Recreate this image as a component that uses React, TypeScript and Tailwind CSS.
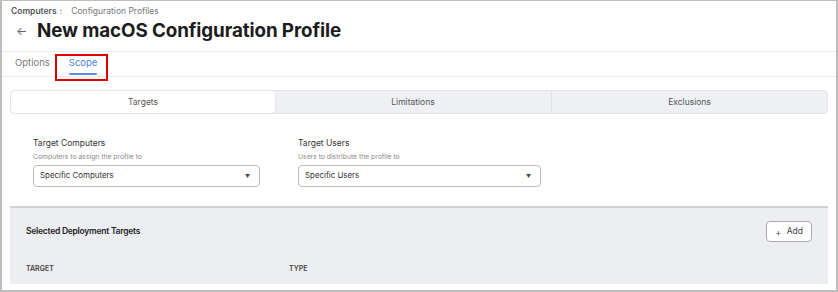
import React from "react";

export default function App() {
  return (
    <div
      className="w-[838px] h-[292px] bg-white border-x-2 border-b-2 border-t border-[#bdbdbd] overflow-hidden text-[#222]"
      style={{ fontFamily: "Inter, 'Noto Sans', sans-serif" }}
    >
      {/* breadcrumb */}
      <div className="flex items-center h-[19px] pl-[9px] pt-[1px] text-[8.5px] leading-none">
        <span className="font-semibold text-[#555]">Computers</span>
        <span className="ml-[3px] font-semibold text-[#777]">:</span>
        <span className="ml-[9px] text-[#777]">Configuration Profiles</span>
      </div>
      {/* title */}
      <div className="flex items-center h-[22px] pl-[14px]">
        <span className="text-[#666] text-[12px] leading-none w-[21px]">←</span>
        <h1 className="text-[18.8px] font-bold leading-none tracking-[-0.1px] text-[#1c1c1c]">
          New macOS Configuration Profile
        </h1>
      </div>
      <div className="h-[10px] border-b border-[#ececec]" />
      {/* tabs */}
      <div className="relative flex items-start h-[25px] pl-[13px] border-b border-[#ececec] text-[9.5px]">
        <div className="pt-[4px] text-[#777]">Options</div>
        <div className="ml-[19px] pt-[4px] text-[#4a7fe0]">
          <div>Scope</div>
          <div className="mt-[3px] h-[2px] bg-[#5b8def] rounded-full" />
        </div>
        <div className="absolute left-[53px] top-[2px] w-[53px] h-[27px] border-2 border-[#e00000] z-10" />
      </div>
      {/* segmented control */}
      <div className="mx-[8px] mt-[13px] flex h-[24px] rounded-[4px] border border-[#e4e6ea] bg-[#eef0f3] text-[8.5px] text-[#555] overflow-hidden">
        <div className="w-[264px] flex items-center justify-center bg-white rounded-[4px] shadow-[0_0_0_1px_#e6e6e6]">
          Targets
        </div>
        <div className="w-[277px] flex items-center justify-center border-r border-[#e2e4e8]">
          Limitations
        </div>
        <div className="flex-1 flex items-center justify-center">Exclusions</div>
      </div>
      {/* form */}
      <div className="flex pl-[31px] pt-[25px] gap-[38px]">
        <div className="w-[227px]">
          <div className="text-[8.5px] text-[#333] leading-none">Target Computers</div>
          <div className="mt-[6px] text-[6.8px] text-[#888] leading-none">Computers to assign the profile to</div>
          <div className="mt-[5px] h-[22px] border border-[#bbb] rounded-[4px] flex items-center justify-between pl-[6px] pr-[9px] text-[7.9px] text-[#333]">
            <span>Specific Computers</span>
            <span className="text-[5px] text-[#444]">▼</span>
          </div>
        </div>
        <div className="w-[243px]">
          <div className="text-[8.5px] text-[#333] leading-none">Target Users</div>
          <div className="mt-[6px] text-[6.8px] text-[#888] leading-none">Users to distribute the profile to</div>
          <div className="mt-[5px] h-[22px] border border-[#bbb] rounded-[4px] flex items-center justify-between pl-[6px] pr-[9px] text-[7.9px] text-[#333]">
            <span>Specific Users</span>
            <span className="text-[5px] text-[#444]">▼</span>
          </div>
        </div>
      </div>
      {/* selected targets */}
      <div className="mx-[8px] mt-[19px] h-[78px] bg-[#eceef2] border-t-2 border-[#cfd1d5]">
        <div className="flex items-center justify-between pl-[16px] pr-[16px] pt-[13px]">
          <div className="text-[8.5px] font-semibold tracking-[-0.25px] text-[#222]">Selected Deployment Targets</div>
          <div className="h-[21px] w-[46px] bg-white border border-[#aaa] rounded-[4px] flex items-center justify-center text-[8.5px] text-[#444] gap-[5px]">
            <span className="text-[10px] leading-none font-light">+</span>
            <span>Add</span>
          </div>
        </div>
        <div className="flex pl-[16px] pt-[22px] text-[7px] font-semibold text-[#444]">
          <div className="w-[263px]">TARGET</div>
          <div>TYPE</div>
        </div>
      </div>
    </div>
  );
}
